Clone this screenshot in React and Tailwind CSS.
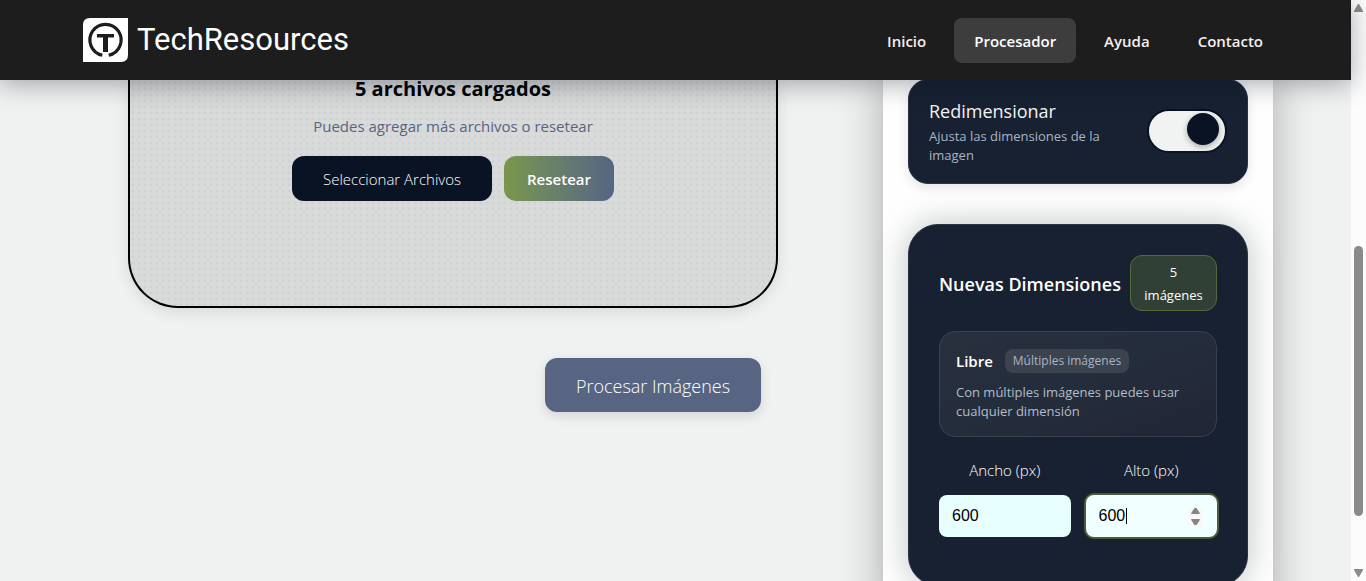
const navItems = ["Inicio", "Procesador", "Ayuda", "Contacto"];

function Logo() {
  return (
    <svg width="46" height="44" viewBox="0 0 46 44" aria-hidden="true">
      <path d="M7 0H45V37Q45 44 38 44H0V7Q0 0 7 0Z" fill="#fff" />
      <path d="M19.3 37.2A15.6 15.6 0 1 1 25.7 37.2" fill="none" stroke="#1d1d1d" strokeWidth="3.2" />
      <path d="M14 16H31V19.5H25V34H20V19.5H14Z" fill="#1d1d1d" />
    </svg>
  );
}

function Header() {
  return (
    <header className="relative z-10 flex h-20 shrink-0 items-start justify-between bg-[#1d1d1d] pt-[18px] pl-[83px] pr-[68px] shadow-[0_4px_24px_rgba(10,18,36,0.35)]">
      <a href="#inicio" className="flex items-center gap-2 font-['Roboto',sans-serif] text-[31px] leading-9 text-white">
        <Logo />
        TechResources
      </a>
      <nav className="flex items-center gap-2">
        {navItems.map((item) => (
          <a
            key={item}
            href={"#" + item.toLowerCase()}
            className={
              "rounded-lg px-5 pt-3 pb-[10px] text-[15px] leading-[23px] font-semibold " +
              (item === "Procesador" ? "bg-[#3d3d3d] text-white" : "text-[#f5eeee]")
            }
          >
            {item}
          </a>
        ))}
      </nav>
    </header>
  );
}

function UploadPanel() {
  return (
    <section className="flex flex-1 flex-col">
      <div className="flex h-[228px] flex-col items-center rounded-b-[50px] border-2 border-t-0 border-black bg-[#d9dbda] bg-[radial-gradient(circle,#d1d3d2_1px,transparent_2px)] bg-size-[6px_6px] shadow-[0_4px_16px_rgba(0,0,0,0.1)]">
        <h2 className="text-[20px] leading-[18px] font-bold text-black">5 archivos cargados</h2>
        <p className="mt-4 text-[15px] leading-6 text-[#586582]">Puedes agregar más archivos o resetear</p>
        <div className="mt-[18px] flex gap-3 text-[15px] leading-[21px]">
          <button className="w-[200px] rounded-xl bg-[#0a1324] pt-[13px] pb-[11px] font-light text-white">Seleccionar Archivos</button>
          <button className="w-[110px] rounded-xl bg-linear-to-r from-[#7b964a] to-[#566582] pt-[13px] pb-[11px] font-semibold text-white">Resetear</button>
        </div>
      </div>
      <button className="mt-[50px] mr-[17px] h-[54px] w-[216px] self-end rounded-xl bg-[#576582] pt-[2px] text-[18px] font-light text-white shadow-[0_4px_12px_rgba(0,0,0,0.12)]">
        Procesar Imágenes
      </button>
    </section>
  );
}

function Spinner() {
  return (
    <svg className="absolute top-[11px] right-[14px]" width="16" height="20" viewBox="0 0 16 20" aria-hidden="true">
      <path d="M0 1H16V20H0Z" fill="#f8f8f8" />
      <path d="M7.5 2H9.5L12.8 7V8H4.2V7ZM4.2 13H12.8V14L9.5 19H7.5L4.2 14Z" fill="#858585" />
    </svg>
  );
}

function DimensionField({ id, label, active }) {
  return (
    <div className="flex min-w-0 flex-1 flex-col">
      <label htmlFor={id} className="text-center text-[15px] leading-6 font-light text-white">
        {label}
      </label>
      <div className="relative mt-[13px]">
        <input
          id={id}
          type="text"
          inputMode="numeric"
          defaultValue="600"
          className={
            "h-[42px] w-full rounded-lg px-[13px] font-['Liberation_Sans',sans-serif] text-[16px] text-black outline-none " +
            (active ? "bg-[#f0ffff] ring-2 ring-[#4b5c3d]" : "bg-[#e8ffff]")
          }
        />
        {active && <span className="absolute top-[13px] left-10 h-4 w-px bg-black" />}
        {active && <Spinner />}
      </div>
    </div>
  );
}

function OptionsPanel() {
  return (
    <aside className="-mt-px w-[390px] shrink-0 bg-[#fdfefd] px-[25px] pb-10 shadow-[0_0_40px_rgba(0,0,0,0.3)]">
      <div className="flex h-[105px] items-start justify-between rounded-[20px] border border-[#2b3443] bg-[#172131] px-5 pt-[19px] shadow-[0_4px_12px_rgba(0,0,0,0.1)]">
        <div className="w-[190px]">
          <label htmlFor="resize" className="block text-[18px] leading-6 text-[#f2f3f3]">Redimensionar</label>
          <p className="mt-1 text-[13px] leading-[19px] text-[#a9b4c4]">Ajusta las dimensiones de la imagen</p>
        </div>
        <input
          id="resize"
          type="checkbox"
          role="switch"
          defaultChecked
          className="mt-[10px] flex h-11 w-20 appearance-none justify-end rounded-full border-2 border-[#0a1324] bg-[#f1f3f2] px-[6px] pt-[2px] before:size-8 before:rounded-full before:bg-[#0a1324] before:shadow-[0_2px_6px_rgba(0,0,0,0.3)]"
        />
      </div>

      <div className="mt-10 rounded-[30px] border border-[#2b3443] bg-[#172131] p-[30px] pb-12 shadow-[0_0_32px_rgba(10,18,36,0.25)]">
        <div className="flex items-center justify-between">
          <h3 className="pt-[2px] text-[18px] leading-6 font-semibold whitespace-nowrap text-white">Nuevas Dimensiones</h3>
          <span className="w-[87px] rounded-xl border border-[#526b3b] bg-[#314035] px-3 pt-[5px] pb-[3px] text-center text-[13px] leading-[23px] font-medium text-white">
            5 imágenes
          </span>
        </div>
        <div className="mt-5 rounded-2xl border border-[#39414e] bg-linear-to-br from-[#28303e] via-[#242d3b] to-[#222535] p-4 pb-[15px]">
          <div className="flex items-center gap-3">
            <strong className="text-[15px] leading-[26px] font-semibold text-white">Libre</strong>
            <span className="rounded-lg bg-[#3a434e] px-2 text-[12px] leading-6 text-[#a9b4c4]">Múltiples imágenes</span>
          </div>
          <p className="mt-[9px] text-[13px] leading-[19px] text-[#b2bdcb]">
            Con múltiples imágenes puedes usar cualquier dimensión
          </p>
        </div>
        <div className="mt-[21px] flex gap-[15px]">
          <DimensionField id="width" label="Ancho (px)" />
          <DimensionField id="height" label="Alto (px)" active />
        </div>
      </div>
    </aside>
  );
}

function ScrollBar() {
  return (
    <div className="flex w-[15px] shrink-0 flex-col items-center bg-[#fcfcfc] py-1" aria-hidden="true">
      <svg width="9" height="8" viewBox="0 0 9 8"><path d="M4 0H5L9 7V8H0V7Z" fill="#8b8b8b" /></svg>
      <div className="grow-[234]" />
      <div className="h-[270px] w-[9px] rounded-full bg-[#8b8b8b]" />
      <div className="grow-[53]" />
      <svg width="9" height="8" viewBox="0 0 9 8"><path d="M0 0H9V1L5 8H4L0 1Z" fill="#8b8b8b" /></svg>
    </div>
  );
}

export default function App() {
  return (
    <div className="flex h-screen overflow-hidden bg-[#f0f2f1] font-['Open_Sans','Noto_Sans',sans-serif]">
      <div className="flex min-w-0 flex-1 flex-col">
        <Header />
        <main className="flex min-h-0 flex-1 items-start gap-[105px] overflow-hidden pr-[78px] pl-32">
          <UploadPanel />
          <OptionsPanel />
        </main>
      </div>
      <ScrollBar />
    </div>
  );
}
